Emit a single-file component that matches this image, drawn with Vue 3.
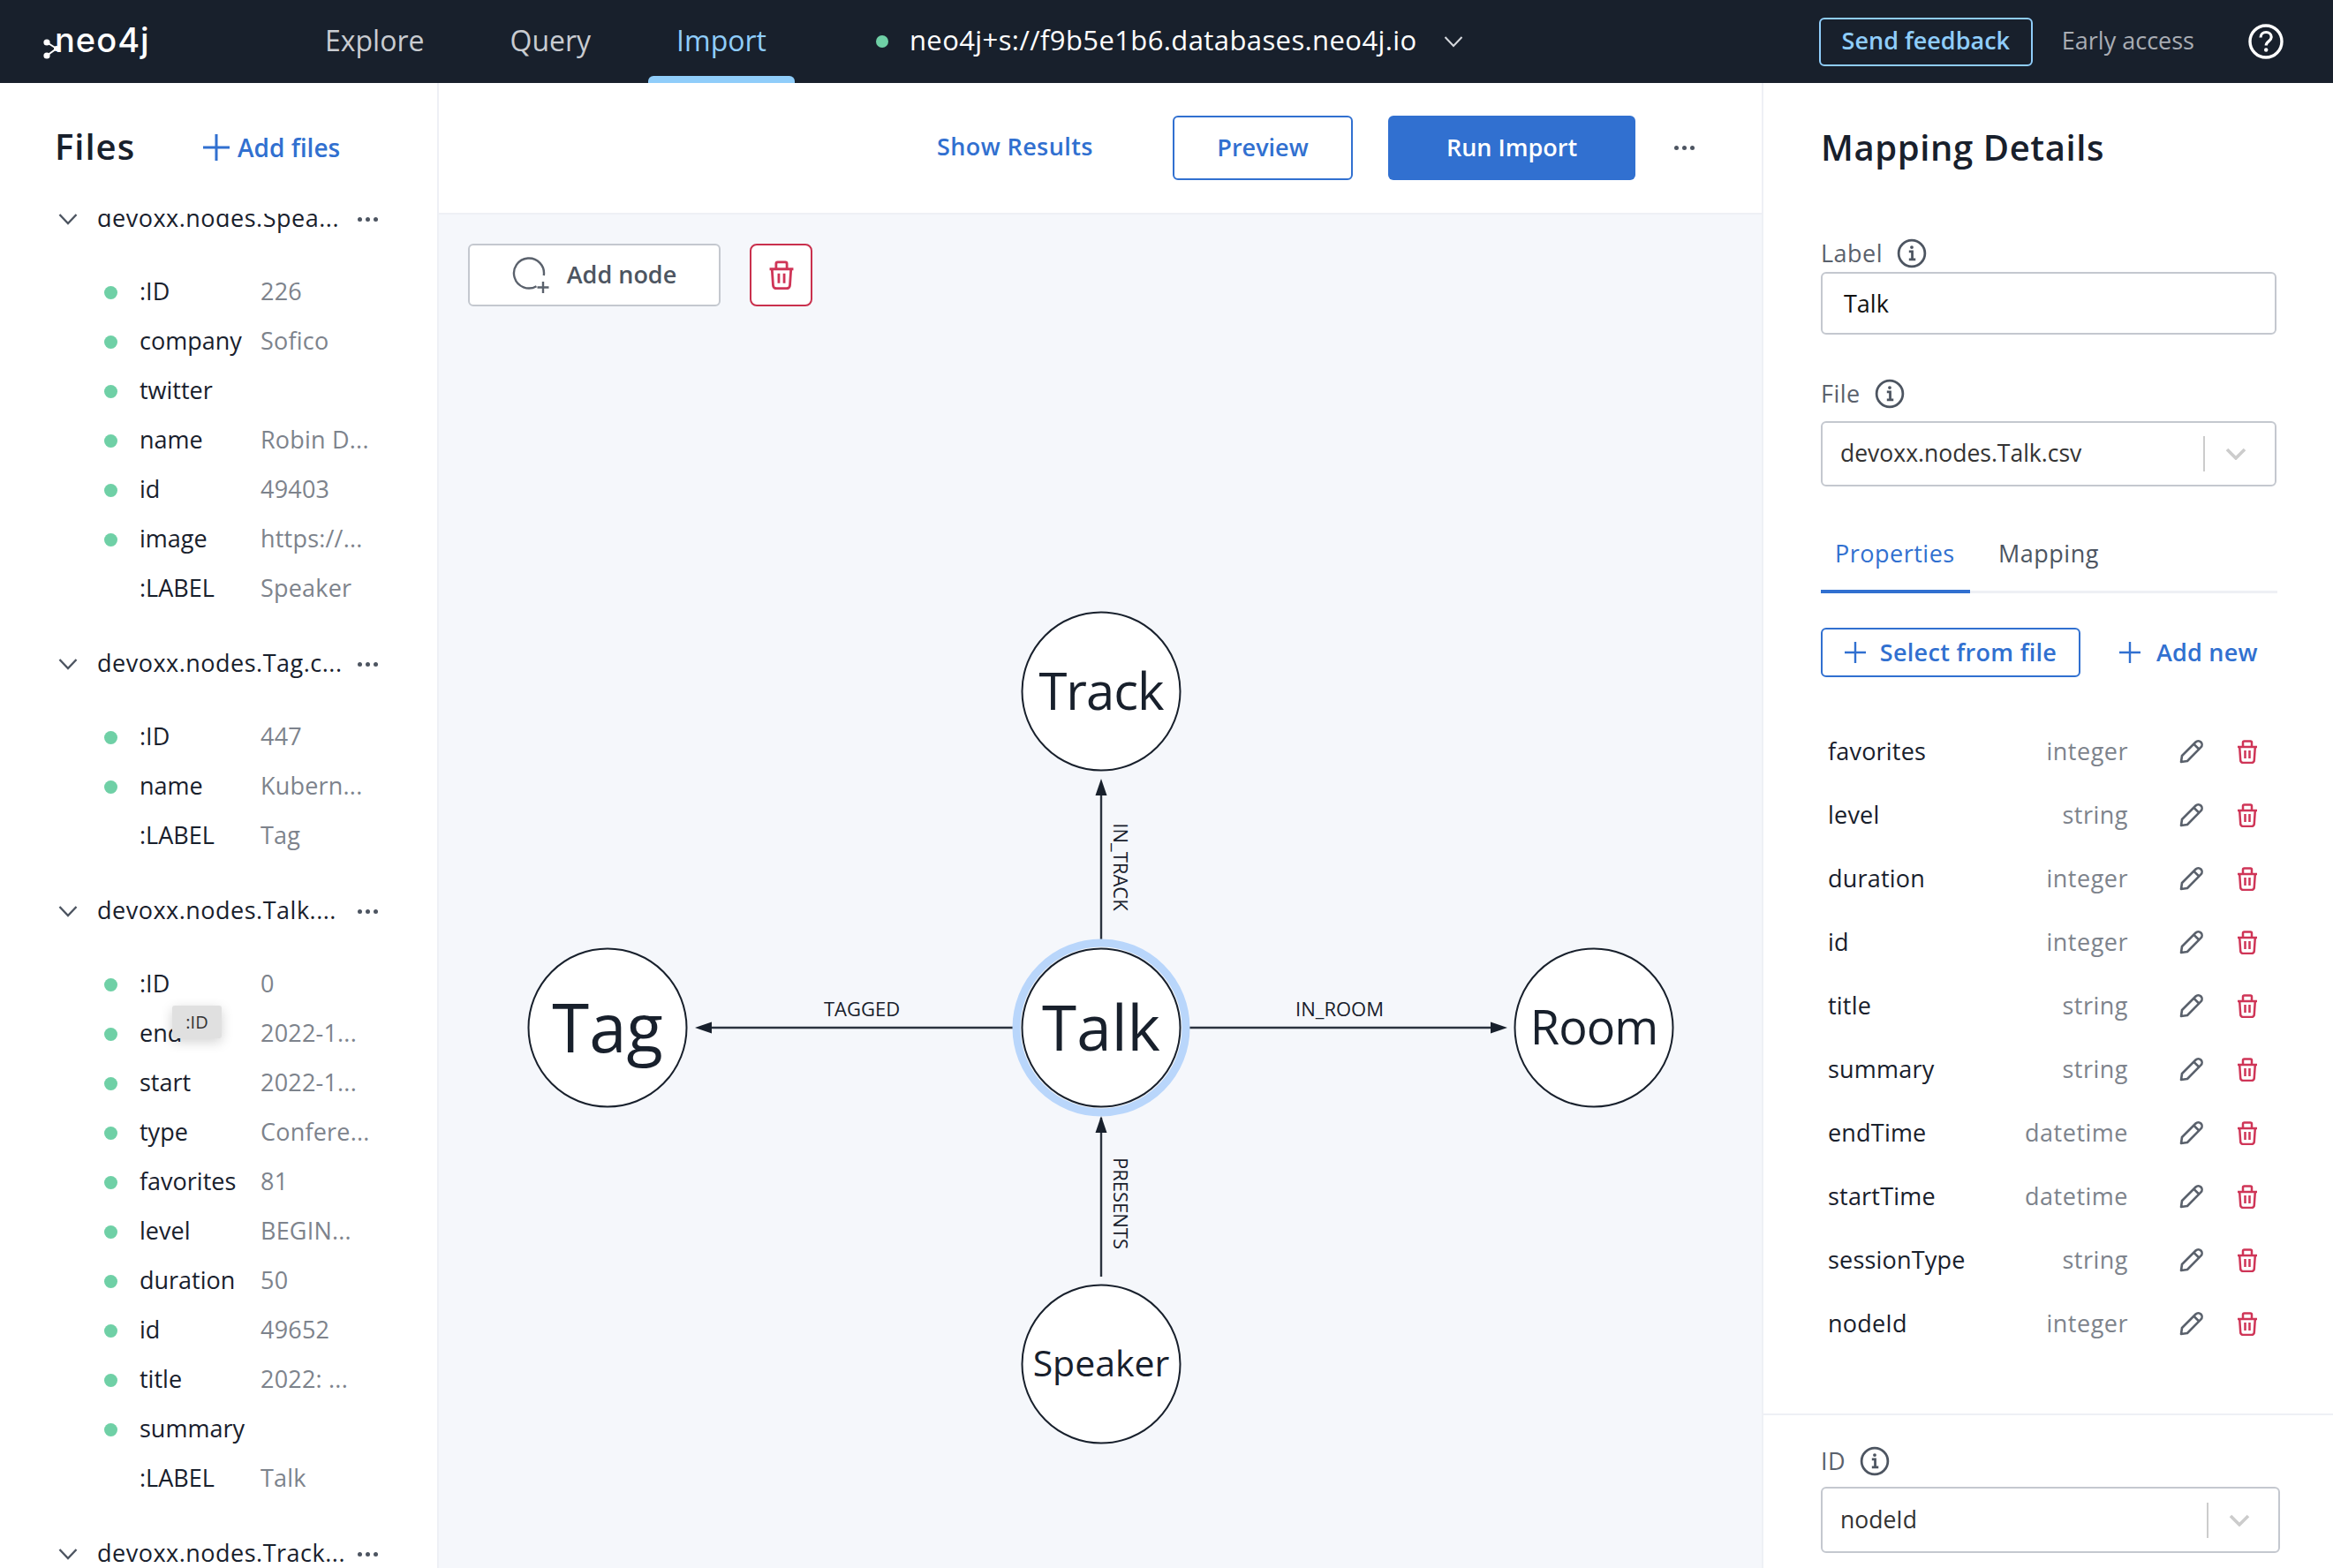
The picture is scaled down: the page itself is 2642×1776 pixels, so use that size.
<script setup>
const groups = [
  {
    name: "devoxx.nodes.Spea...",
    rows: [
      [":ID", "226", true],
      ["company", "Sofico", true],
      ["twitter", "", true],
      ["name", "Robin D...", true],
      ["id", "49403", true],
      ["image", "https://...", true],
      [":LABEL", "Speaker", false],
    ],
  },
  {
    name: "devoxx.nodes.Tag.c...",
    rows: [
      [":ID", "447", true],
      ["name", "Kubern...", true],
      [":LABEL", "Tag", false],
    ],
  },
  {
    name: "devoxx.nodes.Talk....",
    rows: [
      [":ID", "0", true],
      ["end", "2022-1...", true],
      ["start", "2022-1...", true],
      ["type", "Confere...", true],
      ["favorites", "81", true],
      ["level", "BEGIN...", true],
      ["duration", "50", true],
      ["id", "49652", true],
      ["title", "2022: ...", true],
      ["summary", "", true],
      [":LABEL", "Talk", false],
    ],
  },
  { name: "devoxx.nodes.Track...", rows: [] },
];

const properties = [
  ["favorites", "integer"],
  ["level", "string"],
  ["duration", "integer"],
  ["id", "integer"],
  ["title", "string"],
  ["summary", "string"],
  ["endTime", "datetime"],
  ["startTime", "datetime"],
  ["sessionType", "string"],
  ["nodeId", "integer"],
];

// diagram coordinates are relative to the canvas (497, 243)
const nodes = [
  { label: "Track", x: 750, y: 540, size: 58, spacing: -1 },
  { label: "Talk", x: 750, y: 921, size: 71, spacing: 0 },
  { label: "Tag", x: 191, y: 921, size: 76, spacing: 0 },
  { label: "Room", x: 1308, y: 921, size: 54, spacing: -1 },
  { label: "Speaker", x: 750, y: 1302, size: 41, spacing: 0 },
];
</script>

<template>
  <div class="app">
    <header class="topbar">
      <div class="logo">
        <svg class="logo-mark" viewBox="0 0 20 40" width="20" height="40">
          <circle cx="5" cy="21" r="3.600" fill="#fff" />
          <circle cx="16" cy="28" r="3" fill="#fff" />
          <circle cx="5" cy="36" r="3.600" fill="#fff" />
          <path d="M5 21 16 28 5 36" fill="none" stroke="#fff" stroke-width="2" />
        </svg>
        <span>neo4j</span>
      </div>
      <nav class="nav">
        <a class="nav-item">Explore</a>
        <a class="nav-item">Query</a>
        <a class="nav-item active">Import</a>
      </nav>
      <span class="status-dot"></span>
      <span class="db-url">neo4j+s://f9b5e1b6.databases.neo4j.io</span>
      <svg class="db-chevron" viewBox="0 0 22 14" width="22" height="14">
        <path d="M1.5 2 11 12 20.5 2" fill="none" stroke="#d5d8dd" stroke-width="2" />
      </svg>
      <div class="topbar-right">
        <button class="feedback">Send feedback</button>
        <span class="early">Early access</span>
        <svg viewBox="0 0 40 40" width="40" height="40">
          <circle cx="20" cy="20" r="18" fill="none" stroke="#fff" stroke-width="3.4" />
          <path d="M14 15.5c0-3.6 2.8-6 6.200-6s6 2.400 6 5.400c0 4.800-6 4.800-6 9.600" fill="none" stroke="#fff" stroke-width="3.2" />
          <circle cx="20.200" cy="29.500" r="2.200" fill="#fff" />
        </svg>
      </div>
    </header>

    <div class="body">
      <aside class="files">
        <div class="files-head">
          <h2>Files</h2>
          <a class="add-files">
            <svg viewBox="0 0 30 30" width="30" height="30">
              <path d="M15 0v30M0 15h30" stroke="#3170d0" stroke-width="3" />
            </svg>
            Add files
          </a>
        </div>
        <div class="tree">
          <div class="tree-inner">
            <section v-for="group in groups" :key="group.name" class="group">
              <div class="group-head">
                <svg viewBox="0 0 22 14" width="22" height="14">
                  <path d="M1.5 2 11 12 20.500 2" fill="none" stroke="#4d5561" stroke-width="2.400" />
                </svg>
                <span class="group-name">{{ group.name }}</span>
                <span class="dots"><i></i><i></i><i></i></span>
              </div>
              <div class="group-rows">
                <div v-for="row in group.rows" :key="row[0]" class="file-row">
                  <span class="dot" :class="{ hidden: !row[2] }"></span>
                  <span class="key">{{ row[0] }}</span>
                  <span class="val">{{ row[1] }}</span>
                </div>
              </div>
            </section>
          </div>
          <div class="tooltip">:ID</div>
        </div>
      </aside>

      <main class="main">
        <div class="toolbar">
          <a class="show-results">Show Results</a>
          <button class="btn-outline">Preview</button>
          <button class="btn-primary">Run Import</button>
          <span class="dots toolbar-dots"><i></i><i></i><i></i></span>
        </div>
        <div class="canvas">
          <div class="canvas-tools">
            <button class="add-node">
              <svg viewBox="0 0 48 48" width="48" height="48">
                <path d="M27.500 36.200A17 17 0 1 1 35.800 24" fill="none" stroke="#5a616c" stroke-width="2.400" />
                <path d="M35 31v13M28.500 37.500h13" stroke="#5a616c" stroke-width="2.400" />
              </svg>
              <span>Add node</span>
            </button>
            <button class="del-node">
              <svg viewBox="0 0 24 27" width="30" height="33">
                <path d="M1 8h22M7 7V3a1.500 1.500 0 0 1 1.500-1.500h7A1.500 1.500 0 0 1 17 3v4M3.200 8l1 15a3 3 0 0 0 3 3h9.600a3 3 0 0 0 3-3l1-15M9.500 12v9M14.500 12v9" fill="none" stroke="#cf3557" stroke-width="2.300" />
              </svg>
            </button>
          </div>

          <svg class="graph" width="1500" height="1533" viewBox="0 0 1500 1533">
            <g stroke="#2a323e" stroke-width="2.400">
              <path d="M750 822V650" />
              <path d="M651 921H300" />
              <path d="M849 921h355" />
              <path d="M750 1203v-180" />
            </g>
            <g fill="#18202c">
              <path d="M750 639l-6.500 19h13z" />
              <path d="M290 921l19-6.500v13z" />
              <path d="M1210 921l-19-6.500v13z" />
              <path d="M750 1021l-6.500 19h13z" />
            </g>
            <circle cx="750" cy="921" r="96" fill="none" stroke="#b9d6fb" stroke-width="9" />
            <g v-for="node in nodes" :key="node.label">
              <circle :cx="node.x" :cy="node.y" r="89.500" fill="#fff" stroke="#18202c" stroke-width="2" />
              <text :x="node.x" :y="node.y - 2" class="node-text" :font-size="node.size" :letter-spacing="node.spacing" text-anchor="middle" dominant-baseline="central">{{ node.label }}</text>
            </g>
            <text class="edge-text" x="479" y="899" text-anchor="middle" dominant-baseline="central">TAGGED</text>
            <text class="edge-text" x="1020" y="899" text-anchor="middle" dominant-baseline="central">IN_ROOM</text>
            <text class="edge-text" text-anchor="middle" dominant-baseline="central" transform="translate(773 739) rotate(90)">IN_TRACK</text>
            <text class="edge-text" text-anchor="middle" dominant-baseline="central" transform="translate(773 1120) rotate(90)">PRESENTS</text>
          </svg>
        </div>
      </main>

      <aside class="details">
        <div class="details-head"><h2>Mapping Details</h2></div>

        <div class="field-label first">
          <span>Label</span>
          <svg class="info" viewBox="0 0 32 32" width="34" height="34">
            <circle cx="16" cy="16" r="14" fill="none" stroke="#4d5561" stroke-width="2.600" />
            <path d="M13 14h3.500v8M13 22.500h7" fill="none" stroke="#4d5561" stroke-width="2.600" />
            <circle cx="16" cy="9.500" r="1.800" fill="#4d5561" />
          </svg>
        </div>
        <div class="input">Talk</div>

        <div class="field-label file">
          <span>File</span>
          <svg class="info" viewBox="0 0 32 32" width="34" height="34">
            <circle cx="16" cy="16" r="14" fill="none" stroke="#4d5561" stroke-width="2.600" />
            <path d="M13 14h3.500v8M13 22.500h7" fill="none" stroke="#4d5561" stroke-width="2.600" />
            <circle cx="16" cy="9.500" r="1.800" fill="#4d5561" />
          </svg>
        </div>
        <div class="select">
          <span class="select-text">devoxx.nodes.Talk.csv</span>
          <span class="select-sep"></span>
          <svg class="select-chev" viewBox="0 0 24 14" width="24" height="14">
            <path d="M2 2 12 12 22 2" fill="none" stroke="#cccccc" stroke-width="3.600" />
          </svg>
        </div>

        <div class="tabs">
          <span class="tab active">Properties</span>
          <span class="tab">Mapping</span>
        </div>

        <div class="prop-actions">
          <button class="select-file">
            <svg viewBox="0 0 24 24" width="24" height="24">
              <path d="M12 0v24M0 12h24" stroke="#3170d0" stroke-width="2.400" />
            </svg>
            <span>Select from file</span>
          </button>
          <a class="add-new">
            <svg viewBox="0 0 24 24" width="24" height="24">
              <path d="M12 0v24M0 12h24" stroke="#3170d0" stroke-width="2.400" />
            </svg>
            <span>Add new</span>
          </a>
        </div>

        <div class="props">
          <div v-for="prop in properties" :key="prop[0]" class="prop">
            <span class="prop-name">{{ prop[0] }}</span>
            <span class="prop-type">{{ prop[1] }}</span>
            <svg class="pencil" viewBox="0 0 28 28" width="28" height="28">
              <path d="M2 26l1-7L18.500 3.500a3.600 3.600 0 0 1 5.900 5.900L9 25zM16.500 5.800l5.700 5.700" fill="none" stroke="#5a616c" stroke-width="2.600" stroke-linejoin="round" />
            </svg>
            <svg class="trash" viewBox="0 0 24 27" width="24" height="27">
              <path d="M1 8h22M7 7V3a1.500 1.500 0 0 1 1.500-1.500h7A1.500 1.500 0 0 1 17 3v4M3.200 8l1 15a3 3 0 0 0 3 3h9.600a3 3 0 0 0 3-3l1-15M9.500 12v9M14.500 12v9" fill="none" stroke="#cf3557" stroke-width="2.500" />
            </svg>
          </div>
        </div>

        <div class="id-block">
          <div class="field-label id">
            <span>ID</span>
            <svg class="info" viewBox="0 0 32 32" width="34" height="34">
              <circle cx="16" cy="16" r="14" fill="none" stroke="#4d5561" stroke-width="2.600" />
              <path d="M13 14h3.500v8M13 22.500h7" fill="none" stroke="#4d5561" stroke-width="2.600" />
              <circle cx="16" cy="9.500" r="1.800" fill="#4d5561" />
            </svg>
          </div>
          <div class="select wide">
            <span class="select-text">nodeId</span>
            <span class="select-sep"></span>
            <svg class="select-chev" viewBox="0 0 24 14" width="24" height="14">
              <path d="M2 2 12 12 22 2" fill="none" stroke="#cccccc" stroke-width="3.600" />
            </svg>
          </div>
        </div>
      </aside>
    </div>
  </div>
</template>

<style>
html,
body {
  margin: 0;
  background: #fff;
}
</style>

<style scoped>
.app {
  width: 2642px;
  height: 1776px;
  overflow: hidden;
  display: flex;
  flex-direction: column;
  font-family: "Open Sans", "Noto Sans", sans-serif;
  color: #18202c;
  font-size: 27px;
}

h2 {
  margin: 0;
  font-size: 40px;
  font-weight: 600;
  letter-spacing: 0.6px;
  color: #18202c;
  padding-bottom: 2px;
}

button {
  font-family: inherit;
  background: none;
  cursor: pointer;
}

/* top bar */
.topbar {
  flex: none;
  height: 94px;
  background: #18202c;
  display: flex;
  align-items: center;
  padding: 0 56px 0 48px;
  box-sizing: border-box;
  color: #fff;
}

.logo {
  width: 127px;
  margin-right: 161px;
  display: flex;
  align-items: center;
  font-family: Inter, "Open Sans", sans-serif;
  font-size: 38px;
  font-weight: 500;
  letter-spacing: 1px;
}

.logo span {
  margin-left: -6px;
  padding-bottom: 4px;
}

.nav {
  display: flex;
  gap: 33px;
  align-self: stretch;
}

.nav-item {
  position: relative;
  display: flex;
  align-items: center;
  padding: 0 32px 4px;
  font-size: 32px;
  color: #c9ccd1;
}

.nav-item.active {
  color: #8fcdfa;
}

.nav-item.active::after {
  content: "";
  position: absolute;
  left: 0;
  right: 0;
  bottom: 0;
  height: 8px;
  background: #8fcdfa;
  border-radius: 6px 6px 0 0;
}

.status-dot {
  width: 14px;
  height: 14px;
  border-radius: 50%;
  background: #6fd0a6;
  margin: 0 24px 0 92px;
}

.db-url {
  font-size: 31px;
  letter-spacing: 0.4px;
  padding-bottom: 4px;
  color: #fff;
}

.db-chevron {
  margin-left: 30px;
}

.topbar-right {
  margin-left: auto;
  display: flex;
  align-items: center;
}

.feedback {
  width: 242px;
  height: 55px;
  border: 2px solid #8fcdfa;
  border-radius: 6px;
  color: #8fcdfa;
  font-size: 27px;
  font-weight: 600;
  padding: 0 0 3px;
}

.early {
  margin: 0 61px 0 33px;
  font-size: 27px;
  padding-bottom: 3px;
  color: #a9adb4;
}

/* layout */
.body {
  flex: 1;
  display: flex;
  min-height: 0;
}

/* files */
.files {
  flex: none;
  width: 497px;
  box-sizing: border-box;
  border-right: 2px solid #eef0f5;
  display: flex;
  flex-direction: column;
  min-height: 0;
}

.files-head {
  flex: none;
  height: 148px;
  padding: 0 0 2px 62px;
  box-sizing: border-box;
  display: flex;
  align-items: center;
}

.files-head h2 {
  width: 166px;
  letter-spacing: 1px;
  padding-bottom: 4px;
}

.add-files {
  display: flex;
  align-items: center;
  gap: 9px;
  margin-left: 2px;
  color: #3170d0;
  font-size: 28px;
  font-weight: 600;
}

.tree {
  position: relative;
  flex: 1;
  overflow: hidden;
}

.tree-inner {
  margin-top: -22px;
}

.group {
  margin-bottom: 29px;
}

.group-head {
  height: 56px;
  margin-bottom: 27px;
  display: flex;
  align-items: center;
  padding-left: 66px;
  position: relative;
}

.group-name {
  margin-left: 22px;
  width: 295px;
  white-space: nowrap;
  letter-spacing: 0.5px;
  padding-bottom: 3px;
}

.dots {
  display: inline-flex;
  gap: 4px;
}

.dots i {
  width: 5px;
  height: 5px;
  border-radius: 50%;
  background: #4d5561;
}

.file-row {
  height: 56px;
  display: flex;
  align-items: center;
  padding-left: 118px;
}

.dot {
  width: 15px;
  height: 15px;
  border-radius: 50%;
  background: #6fd0a6;
  flex: none;
}

.dot.hidden {
  visibility: hidden;
}

.key {
  margin-left: 25px;
  width: 137px;
  white-space: nowrap;
  padding-bottom: 3px;
}

.val {
  color: #7d838c;
  white-space: nowrap;
  letter-spacing: 0.2px;
  padding-bottom: 3px;
}

.tooltip {
  position: absolute;
  left: 195px;
  top: 897px;
  width: 56px;
  height: 37px;
  background: #e0e0e0;
  border-radius: 3px;
  box-shadow: 0 4px 14px rgba(0, 0, 0, 0.18);
  font-size: 20px;
  line-height: 37px;
  text-align: center;
  color: #333;
}

/* main */
.main {
  flex: none;
  width: 1500px;
  display: flex;
  flex-direction: column;
  min-height: 0;
  border-right: 2px solid #eef0f5;
  box-sizing: border-box;
}

.toolbar {
  flex: none;
  height: 149px;
  box-sizing: border-box;
  padding: 37px 0 0 564px;
  display: flex;
  align-items: flex-start;
  border-bottom: 2px solid #eef0f5;
}

.show-results {
  height: 70px;
  line-height: 70px;
  color: #3170d0;
  font-weight: 600;
  font-size: 27px;
  letter-spacing: 0.4px;
  width: 267px;
}

.btn-outline,
.btn-primary {
  height: 73px;
  border-radius: 6px;
  font-size: 27px;
  font-weight: 600;
  padding: 0 0 3px;
}

.btn-outline {
  width: 204px;
  border: 2px solid #3170d0;
  color: #3170d0;
  margin-right: 40px;
  background: #fff;
}

.btn-primary {
  width: 280px;
  border: none;
  background: #3170d0;
  color: #fff;
}

.toolbar-dots {
  margin: 34px 0 0 44px;
}

.canvas {
  position: relative;
  flex: 1;
  background: #f5f7fb;
  overflow: hidden;
}

.canvas-tools {
  position: relative;
  z-index: 1;
  display: flex;
  gap: 33px;
  padding: 33px 0 0 33px;
}

.add-node {
  width: 286px;
  height: 71px;
  border: 2px solid #c4c8cf;
  border-radius: 6px;
  background: #fff;
  display: flex;
  align-items: center;
  justify-content: center;
  gap: 14px;
  padding: 0;
  font-size: 27px;
  font-weight: 600;
  color: #4d5561;
}

.add-node span {
  padding-bottom: 3px;
}

.del-node {
  width: 71px;
  height: 71px;
  border: 2px solid #c9304d;
  border-radius: 8px;
  background: #fff;
  padding: 0;
  display: flex;
  align-items: center;
  justify-content: center;
}

.graph {
  position: absolute;
  left: 0;
  top: 0;
}

.node-text {
  fill: #18202c;
  font-family: "Open Sans", "Noto Sans", sans-serif;
}

.edge-text {
  fill: #18202c;
  font-size: 22px;
  font-family: "Open Sans", "Noto Sans", sans-serif;
}

/* details */
.details {
  flex: 1;
  min-width: 0;
  padding-left: 65px;
  position: relative;
}

.details-head {
  height: 146px;
  display: flex;
  align-items: center;
}

.field-label {
  height: 40px;
  display: flex;
  align-items: center;
  gap: 16px;
  color: #5a616c;
  letter-spacing: 0.5px;
}

.field-label span {
  padding-bottom: 2px;
}

.field-label.first {
  margin-top: 27px;
  margin-bottom: 1px;
}

.field-label.file {
  margin-top: 47px;
  margin-bottom: 11px;
}

.input,
.select {
  width: 516px;
  box-sizing: border-box;
  border: 2px solid #c4c8cf;
  border-radius: 6px;
  display: flex;
  align-items: center;
}

.input {
  height: 71px;
  padding: 0 0 1px 24px;
  color: #111;
}

.select {
  height: 74px;
  padding-left: 20px;
  color: #333;
}

.select.wide {
  width: 520px;
  height: 75px;
}

.select-text {
  flex: 1;
  padding-bottom: 2px;
  font-size: 26.5px;
}

.select-sep {
  width: 2px;
  height: 40px;
  background: #cccccc;
}

.select-chev {
  margin: 0 32px 0 23px;
}

.tabs {
  width: 517px;
  margin-top: 50px;
  display: flex;
  border-bottom: 3px solid #eef0f5;
  height: 68px;
  line-height: 52px;
  letter-spacing: 0.5px;
}

.tab {
  padding: 0 16px;
  color: #4d5561;
  height: 68px;
}

.tab.active {
  width: 137px;
  color: #3170d0;
  border-bottom: 4px solid #3170d0;
  margin-right: 16px;
  height: 67px;
}

.prop-actions {
  margin-top: 39px;
  display: flex;
  align-items: center;
}

.select-file {
  width: 294px;
  height: 56px;
  border: 2px solid #3170d0;
  border-radius: 6px;
  color: #3170d0;
  font-size: 27px;
  font-weight: 600;
  letter-spacing: 0.3px;
  padding: 0;
  display: flex;
  align-items: center;
  justify-content: center;
  gap: 16px;
}

.select-file span,
.add-new span {
  padding-bottom: 2px;
}

.add-new {
  margin-left: 44px;
  display: flex;
  align-items: center;
  gap: 18px;
  color: #3170d0;
  font-weight: 600;
  letter-spacing: 0.2px;
}

.props {
  margin-top: 48px;
  width: 517px;
}

.prop {
  height: 72px;
  display: flex;
  align-items: center;
  padding: 0 22px 0 8px;
  box-sizing: border-box;
}

.prop-name {
  flex: 1;
  padding-bottom: 2px;
  letter-spacing: 0.2px;
}

.prop-type {
  color: #7d838c;
  padding-bottom: 2px;
  letter-spacing: 0.5px;
}

.pencil {
  margin-left: 58px;
}

.trash {
  margin-left: 37px;
}

.id-block {
  position: relative;
  margin: 66px 0 0 -65px;
  padding: 32px 0 0 65px;
  border-top: 2px solid #eef0f5;
}

.field-label.id {
  margin-bottom: 9px;
}
</style>
